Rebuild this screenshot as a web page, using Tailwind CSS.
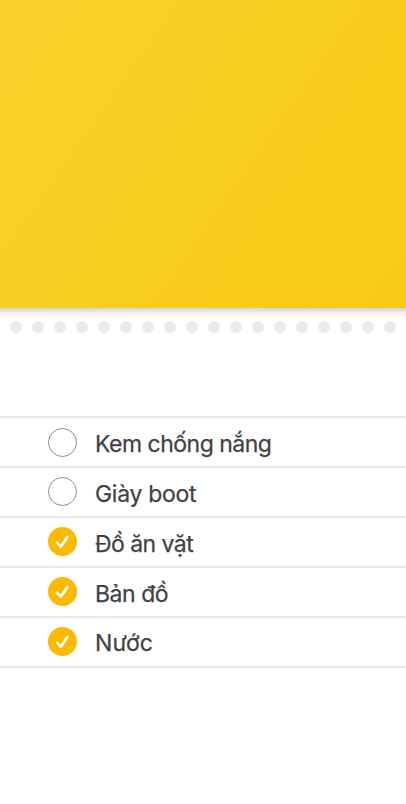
<!DOCTYPE html>
<html lang="vi">
<head>
<meta charset="utf-8">
<meta name="viewport" content="width=device-width, initial-scale=1">
<title>Danh sách</title>
<script src="https://cdn.jsdelivr.net/npm/@tailwindcss/browser@4"></script>
</head>
<body class="bg-white">
<svg class="hidden">
  <symbol id="open" viewBox="0 0 29 29"><circle cx="14.5" cy="14.5" r="14" fill="#fff" stroke="#8c8c8c" stroke-width="1"/></symbol>
  <symbol id="done" viewBox="0 0 29 29"><circle cx="14.5" cy="14.5" r="14.5" fill="#fdb900"/><path d="M9.2 15.8L12.8 19.8L19.6 9.8" fill="none" stroke="#fff" stroke-width="2.7" stroke-linecap="round" stroke-linejoin="round"/></symbol>
</svg>
<main class="flex h-[804px] w-[406px] flex-col overflow-hidden bg-white font-['Inter','Liberation_Sans',sans-serif]">
  <header class="h-[308px] shrink-0 bg-linear-[125deg] from-[#fad12c] via-[#f8ce20] to-[#f7ca14]"></header>
  <div class="h-[10px] shrink-0 bg-linear-to-b from-[#d4d4d4] via-[#f0f0f0] to-white"></div>
  <svg class="h-[18px] w-full shrink-0" viewBox="0 0 406 18"><defs><pattern id="dots" x="5" y="0" width="22" height="18" patternUnits="userSpaceOnUse"><circle cx="11" cy="9" r="6" fill="#ebebeb"/></pattern></defs><rect width="406" height="18" fill="url(#dots)"/></svg>
  <ul class="mt-20 border-t-2 border-[#e9e9e9] text-[23px] leading-[28px] text-[#414244] [-webkit-text-stroke:0.25px_#414244]">
    <li class="flex h-[50px] items-start gap-[18px] border-b-2 border-[#e9e9e9] pl-12 pt-[10px]"><svg class="size-[29px] shrink-0"><use href="#open"/></svg><span class="mt-[2px] whitespace-nowrap tracking-[-0.5px]">Kem chống nắng</span></li>
    <li class="flex h-[50px] items-start gap-[18px] border-b-2 border-[#e9e9e9] pl-12 pt-[9px]"><svg class="size-[29px] shrink-0"><use href="#open"/></svg><span class="mt-[3px] whitespace-nowrap tracking-[-0.3px]">Giày boot</span></li>
    <li class="flex h-[50px] items-start gap-[18px] border-b-2 border-[#e9e9e9] pl-12 pt-[9px]"><svg class="size-[29px] shrink-0"><use href="#done"/></svg><span class="mt-[3px] whitespace-nowrap tracking-[-0.55px]">Đồ ăn vặt</span></li>
    <li class="flex h-[50px] items-start gap-[18px] border-b-2 border-[#e9e9e9] pl-12 pt-[9px]"><svg class="size-[29px] shrink-0"><use href="#done"/></svg><span class="mt-[3px] whitespace-nowrap tracking-[-0.45px]">Bản đồ</span></li>
    <li class="flex h-[50px] items-start gap-[18px] border-b-2 border-[#e9e9e9] pl-12 pt-[9px]"><svg class="size-[29px] shrink-0"><use href="#done"/></svg><span class="mt-[2px] whitespace-nowrap tracking-[0.1px]">Nước</span></li>
  </ul>
</main>
</body>
</html>
